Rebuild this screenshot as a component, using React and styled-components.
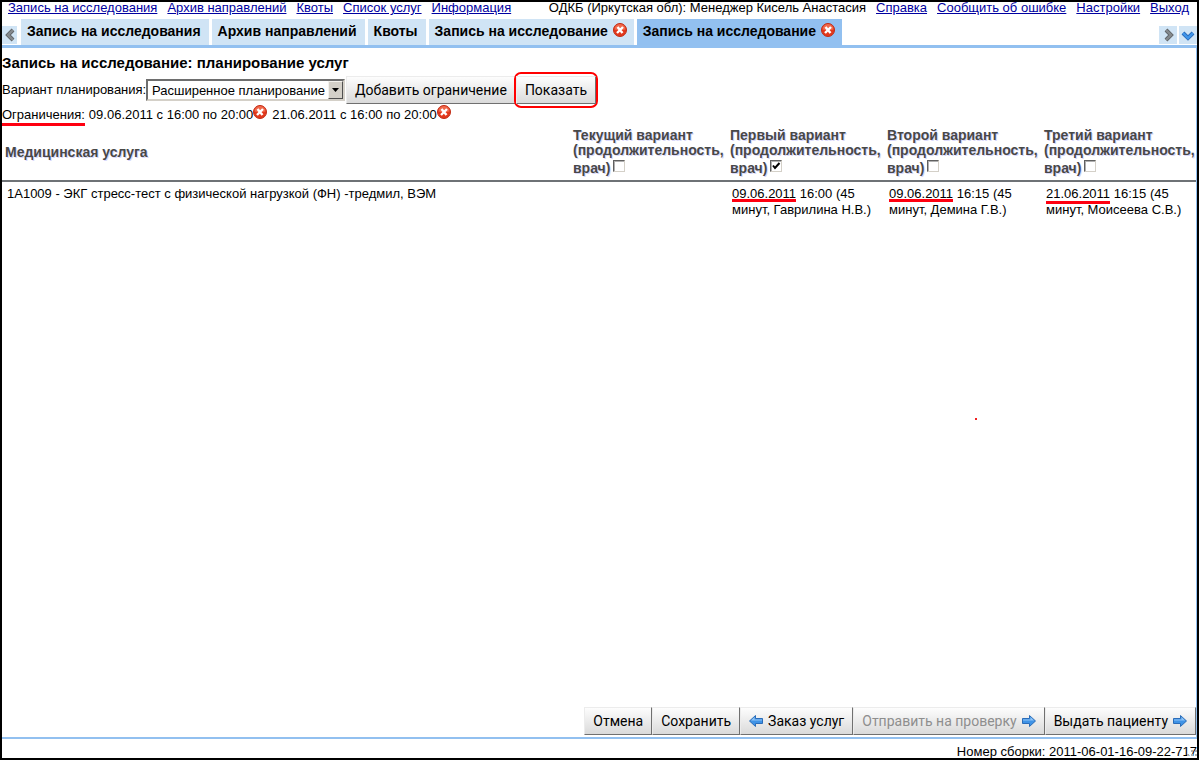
import React, { useState } from "react";
import styled, { createGlobalStyle } from "styled-components";

const GlobalStyle = createGlobalStyle`
  * {
    box-sizing: border-box;
  }

  body {
    margin: 0;
    background-color: white;
    color: black;
    font-family: "Liberation Sans", Arial, sans-serif;
    font-size: 13px;
    line-height: 16px;
  }

  button, select, input {
    font-family: inherit;
    margin: 0;
  }
`;

const Window = styled.div`
  position: relative;
  display: flex;
  flex-direction: column;
  min-height: calc(100vh - 4px);
  margin: 0 3px 4px 0;
  border: 2px solid black;
`;

const TopMenu = styled.nav`
  display: flex;
  justify-content: space-between;
  height: 17px;
  padding: 0 8px 0 6px;
  line-height: 12px;
  white-space: nowrap;
`;

const MenuGroup = styled.div`
  display: flex;
  gap: 10px;
`;

const MenuLink = styled.a`
  color: #0000a0;
  text-decoration: underline;
`;

const TabBar = styled.div`
  display: flex;
  align-items: flex-end;
  height: 29px;
  border-bottom: 3px solid #92c0f0;
`;

const Tabs = styled.div`
  display: flex;
  flex: 1;
  gap: 3px;
  margin-left: 4px;
`;

const TabItem = styled.div`
  display: flex;
  gap: 5px;
  height: 26px;
  padding: 4px ${({ $closable }) => ($closable ? "7px" : "8px")} 0 6px;
  background-color: ${({ $active }) => ($active ? "#92c0f0" : "#d0e4f5")};
`;

const TabLabel = styled.button`
  height: 16px;
  padding: 0;
  border: none;
  background: none;
  color: black;
  font-size: 14px;
  font-weight: bold;
  line-height: 16px;
  white-space: nowrap;
`;

const ScrollButton = styled.button`
  display: flex;
  align-items: center;
  justify-content: center;
  width: ${({ $narrow }) => ($narrow ? "15px" : "18px")};
  height: 18px;
  margin: 0 0 1px ${({ $gap }) => ($gap ? "2px" : "0")};
  padding: 0;
  border: none;
  background-color: #d0e4f5;
`;

const CloseButton = styled.button`
  display: inline-flex;
  width: 14px;
  height: 14px;
  padding: 0;
  border: none;
  background: none;
`;

const Content = styled.main`
  display: flex;
  flex: 1;
  flex-direction: column;
  border-right: 1px solid #92c0f0;
  border-bottom: 2px solid #92c0f0;
`;

const Title = styled.h1`
  margin: 7px 0 5px;
  font-size: 15px;
  line-height: 16px;
`;

const PlanRow = styled.div`
  display: flex;
  align-items: center;
  height: 28px;
`;

const PlanLabel = styled.label`
  width: 144px;
  white-space: nowrap;
`;

const PlanSelectBox = styled.div`
  position: relative;
  width: 199px;
  height: 22px;
  margin-right: 1px;
  border: 2px solid;
  border-color: #6e6e6e #d4d0c8 #d4d0c8 #6e6e6e;
`;

const PlanSelect = styled.select`
  appearance: none;
  width: 100%;
  height: 18px;
  padding: 0 18px 0 4px;
  border: none;
  background-color: white;
  color: black;
  font-size: 13px;
`;

const SelectArrow = styled.span`
  position: absolute;
  top: 0;
  right: 0;
  display: flex;
  align-items: center;
  justify-content: center;
  width: 15px;
  height: 18px;
  border: 1px solid;
  border-color: #f4f2ee #505050 #505050 #f4f2ee;
  background-color: #d4d0c8;
  pointer-events: none;
`;

const ActionButton = styled.button`
  display: flex;
  align-items: center;
  justify-content: center;
  gap: 5px;
  height: 28px;
  padding: 0 8px;
  border: 1px solid;
  border-color: #ececec #707070 #707070 #ececec;
  background: linear-gradient(#fdfdfd, #dadada);
  color: black;
  font-family: Roboto, sans-serif;
  font-size: 14px;
  white-space: nowrap;

  &:disabled {
    color: #8e8e8e;
  }
`;

const Highlight = styled.span`
  display: flex;
  margin: 0 -2px;
  padding: 2px 0;
  border: 2px solid #ff0000;
  border-radius: 7px;
`;

const LimitRow = styled.div`
  display: flex;
  height: 21px;
  padding-top: 1px;
`;

const LimitLabel = styled.span`
  height: 21px;
  margin-right: 4px;
  padding-top: 2px;
  border-bottom: 3px solid #ff0010;
`;

const Limit = styled.span`
  display: flex;
  margin-right: 5px;
`;

const LimitText = styled.span`
  padding-top: 2px;
`;

const Services = styled.table`
  width: 100%;
  border-collapse: collapse;
  table-layout: fixed;
`;

const HeadCell = styled.th`
  width: ${({ $variant }) => ($variant ? "157px" : "auto")};
  height: 56px;
  padding: 0 0 0 ${({ $variant }) => ($variant ? "5px" : "3px")};
  border-bottom: 2px solid #6e7276;
  color: #484848;
  font-size: 14px;
  font-weight: bold;
  line-height: 15px;
  text-align: left;
  text-shadow: 1px 1px #d8d8fa;
  vertical-align: middle;
`;

const VariantLabel = styled.label`
  display: block;
`;

const CheckRow = styled.span`
  display: flex;
  gap: 3px;
  line-height: 20px;
`;

const CheckBox = styled.input`
  appearance: none;
  width: 12px;
  height: 12px;
  margin-top: 2px;
  border: 1px solid;
  border-color: #606060 #d4d0c8 #d4d0c8 #606060;
  background-color: white;
  box-shadow: inset 1px 1px #b0b0b0;

  &:checked {
    background-image: url("data:image/svg+xml,%3Csvg xmlns='http://www.w3.org/2000/svg' viewBox='0 0 10 10'%3E%3Cpath d='M2 4.5 4 7 8.5 2' fill='none' stroke='black' stroke-width='2'/%3E%3C/svg%3E");
  }
`;

const Cell = styled.td`
  padding: 4px 0 0 ${({ $variant }) => ($variant ? "7px" : "5px")};
  vertical-align: top;
`;

const MarkedDate = styled.span`
  position: relative;

  &::after {
    content: "";
    position: absolute;
    right: 0;
    bottom: ${({ $low }) => ($low ? "-3px" : "-1px")};
    left: 0;
    height: 3px;
    background-color: #ff0010;
  }
`;

const RedDot = styled.span`
  position: absolute;
  top: 55%;
  left: 81.4%;
  width: 2px;
  height: 2px;
  background-color: #f02020;
`;

const Actions = styled.div`
  display: flex;
  justify-content: flex-end;
  margin-top: auto;
  padding-bottom: 2px;
`;

const Footer = styled.footer`
  display: flex;
  justify-content: flex-end;
  height: 19px;
  padding-top: 6px;
  line-height: 13px;
`;

const ResizeGrip = styled.svg`
  position: absolute;
  right: 0;
  bottom: 0;
`;

const CloseIcon = () => (
  <svg width="14" height="14" viewBox="0 0 14 14">
    <circle cx="7" cy="7" r="6.5" fill="#e2381c" stroke="#c02c14" />
    <path d="M1.5 6.5a5.5 5.5 0 0 1 11 0Q7 7.5 1.5 6.5" fill="#f0694c" />
    <path d="m4.5 4 5 6M10 4l-6 6" stroke="white" strokeWidth="2.4" />
  </svg>
);

const ChevronIcon = ({ d, color = "#858a8e", dark = "#5e6367" }) => (
  <svg width="14" height="14" viewBox="0 0 14 14" fill="none">
    <path d={d} stroke={dark} strokeWidth="4" />
    <path d={d} stroke={color} strokeWidth="2.4" />
  </svg>
);

const ArrowIcon = ({ left }) => (
  <svg width="14" height="14" viewBox="0 0 14 14">
    <path
      d={left ? "M.5 7 6.5 1.5v3h7v5h-7v3z" : "M13.5 7l-6-5.5v3h-7v5h7v3z"}
      fill="#3f93e6"
      stroke="#2b6cb8"
    />
    <path d={left ? "M2 6.5 5.5 3v2.5H13v1z" : "M12 6.5 8.5 3v2.5H1v1z"} fill="#8fc4f6" />
  </svg>
);

const leftLinks = ["Запись на исследования", "Архив направлений", "Квоты", "Список услуг", "Информация"];
const rightLinks = ["Справка", "Сообщить об ошибке", "Настройки", "Выход"];

const tabs = [
  { title: "Запись на исследования" },
  { title: "Архив направлений" },
  { title: "Квоты" },
  { title: "Запись на исследование", closable: true },
  { title: "Запись на исследование", closable: true, active: true },
];

const limits = ["09.06.2011 с 16:00 по 20:00", "21.06.2011 с 16:00 по 20:00"];

const variants = [
  { name: "Текущий вариант" },
  { name: "Первый вариант", date: "09.06.2011", text: "16:00 (45 минут, Гаврилина Н.В.)" },
  { name: "Второй вариант", date: "09.06.2011", text: "16:15 (45 минут, Демина Г.В.)" },
  { name: "Третий вариант", date: "21.06.2011", text: "16:15 (45 минут, Моисеева С.В.)", low: true },
];

const App = () => {
  const [selected, setSelected] = useState(1);

  return (
    <>
      <GlobalStyle />
      <Window>
        <TopMenu>
          <MenuGroup>
            {leftLinks.map((txt) => (
              <MenuLink href="#" key={txt}>{txt}</MenuLink>
            ))}
          </MenuGroup>
          <MenuGroup>
            <span>ОДКБ (Иркутская обл): Менеджер Кисель Анастасия</span>
            {rightLinks.map((txt) => (
              <MenuLink href="#" key={txt}>{txt}</MenuLink>
            ))}
          </MenuGroup>
        </TopMenu>

        <TabBar>
          <ScrollButton $narrow aria-label="Назад">
            <ChevronIcon d="M10 2 5 7l5 5" />
          </ScrollButton>
          <Tabs>
            {tabs.map((tab, i) => (
              <TabItem key={i} $active={tab.active} $closable={tab.closable}>
                <TabLabel>{tab.title}</TabLabel>
                {tab.closable && (
                  <CloseButton aria-label="Закрыть">
                    <CloseIcon />
                  </CloseButton>
                )}
              </TabItem>
            ))}
          </Tabs>
          <ScrollButton aria-label="Вперёд">
            <ChevronIcon d="m5 2 5 5-5 5" />
          </ScrollButton>
          <ScrollButton $gap aria-label="Все вкладки">
            <ChevronIcon d="m2 5 5 5 5-5" color="#3f95ea" dark="#2868b8" />
          </ScrollButton>
        </TabBar>

        <Content>
          <Title>Запись на исследование: планирование услуг</Title>
          <PlanRow>
            <PlanLabel htmlFor="plan">Вариант планирования:</PlanLabel>
            <PlanSelectBox>
              <PlanSelect id="plan">
                <option>Расширенное планирование</option>
              </PlanSelect>
              <SelectArrow>
                <svg width="7" height="4" viewBox="0 0 7 4">
                  <path d="M0 0h7L3.5 4z" />
                </svg>
              </SelectArrow>
            </PlanSelectBox>
            <ActionButton>Добавить ограничение</ActionButton>
            <Highlight>
              <ActionButton>Показать</ActionButton>
            </Highlight>
          </PlanRow>
          <LimitRow>
            <LimitLabel>Ограничения:</LimitLabel>
            {limits.map((txt) => (
              <Limit key={txt}>
                <LimitText>{txt}</LimitText>
                <CloseButton aria-label="Удалить ограничение">
                  <CloseIcon />
                </CloseButton>
              </Limit>
            ))}
          </LimitRow>

          <Services>
            <thead>
              <tr>
                <HeadCell>Медицинская услуга</HeadCell>
                {variants.map((v, i) => (
                  <HeadCell $variant key={v.name}>
                    <VariantLabel>
                      {v.name} (продолжительность,
                      <CheckRow>
                        врач)
                        <CheckBox
                          type="checkbox"
                          checked={selected === i}
                          onChange={() => setSelected(i)}
                        />
                      </CheckRow>
                    </VariantLabel>
                  </HeadCell>
                ))}
              </tr>
            </thead>
            <tbody>
              <tr>
                <Cell>1A1009 - ЭКГ стресс-тест с физической нагрузкой (ФН) -тредмил, ВЭМ</Cell>
                {variants.map((v) => (
                  <Cell $variant key={v.name}>
                    {v.date && <MarkedDate $low={v.low}>{v.date}</MarkedDate>} {v.text}
                  </Cell>
                ))}
              </tr>
            </tbody>
          </Services>

          <Actions>
            <ActionButton>Отмена</ActionButton>
            <ActionButton>Сохранить</ActionButton>
            <ActionButton><ArrowIcon left />Заказ услуг</ActionButton>
            <ActionButton disabled>Отправить на проверку<ArrowIcon /></ActionButton>
            <ActionButton>Выдать пациенту<ArrowIcon /></ActionButton>
          </Actions>
        </Content>
        <Footer>Номер сборки: 2011-06-01-16-09-22-717</Footer>
        <ResizeGrip width="10" height="10" viewBox="0 0 10 10" fill="#b0b0b0">
          <path d="M0 6h2v2H0zM4 6h2v2H4zM4 2h2v2H4zM8 6h2v2H8zM8 2h2v2H8z" />
        </ResizeGrip>
        <RedDot />
      </Window>
    </>
  );
};

export default App;
